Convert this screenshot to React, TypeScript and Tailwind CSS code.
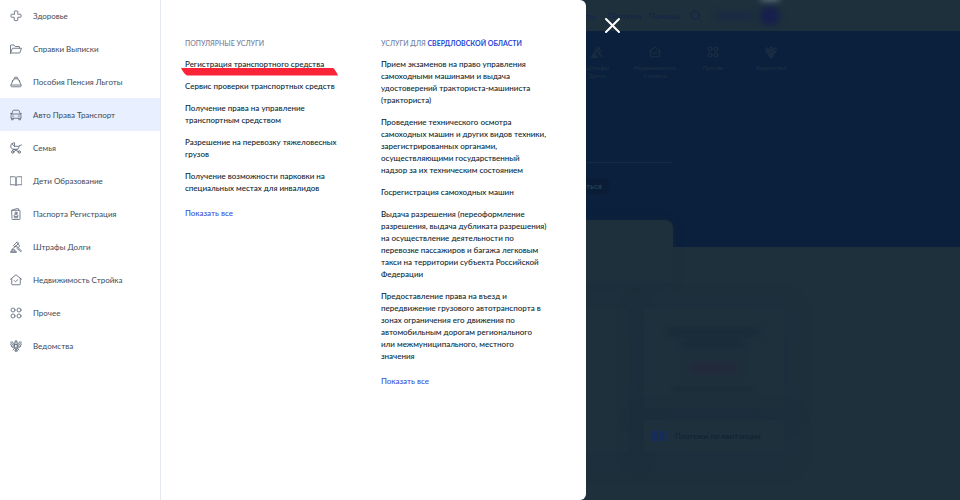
import React from "react";
import { clsx } from "clsx";

type IconProps = {
    className?: string;
    children: React.ReactNode;
};

const Icon = ({ className, children }: IconProps) => (
    <svg
        viewBox="0 0 24 24"
        fill="none"
        stroke="currentColor"
        strokeWidth="1.8"
        strokeLinecap="round"
        strokeLinejoin="round"
        aria-hidden="true"
        className={clsx("shrink-0", className)}
    >
        {children}
    </svg>
);

const icons = {
    health: <path d="M8.500 3a1 1 0 0 1 1-1h5a1 1 0 0 1 1 1v5.500H21a1 1 0 0 1 1 1v4a1 1 0 0 1-1 1h-5.500V20a1 1 0 0 1-1 1h-5a1 1 0 0 1-1-1v-5.500H3a1 1 0 0 1-1-1v-4a1 1 0 0 1 1-1h5.500z" />,
    folder: <path d="M1 20V5a1 1 0 0 1 1-1h6l2.500 3H18a1 1 0 0 1 1 1v2M1 20l4-9.500h18L19.500 20H1z" />,
    purse: (
        <>
            <path d="M6.500 8 2 17.500c-1 2.500 0 4 2 4h16c2 0 3-1.500 2-4L17.500 8" />
            <path d="M4.500 11.500C5.500 6.500 8.500 5.500 12 5.500s6.500 1 7.500 6M8.500 5.500 9.500 2.500h5l1 3M2.500 18h19" />
        </>
    ),
    car: (
        <>
            <path d="M3.500 10 5.500 4C5.800 3 6.500 2.500 7.500 2.500h9c1 0 1.700.5 2 1.500L20.500 10M1 9l2.500 1M23 9l-2.500 1M3.500 10h17c1 1 1.500 2 1.500 3.500V18.500H2v-5c0-1.500.500-2.500 1.500-3.500z" />
            <path d="M3 18.500v3h3.500v-3M17.500 18.500v3H21v-3M5.500 14h2M16.500 14h2" />
        </>
    ),
    family: (
        <>
            <path d="M9 8.500V1.500C5 1.500 1.500 4.500 1.500 8c0 4 2.500 6.500 6 6.500h6.500c2.500 0 3.500-2 4-5L19 7l4-1M9 8.500 3.500 3.500M9 8.500h9M15 14.500 6 20M8 14.500l10 5.500M7 14.500 4.500 18" />
            <circle cx="5.500" cy="20" r="2.500" />
            <circle cx="18.500" cy="20" r="2.500" />
        </>
    ),
    book: <path d="M1 3.500h8c2 0 3 1 3 2.500V21c-.5-1-1.500-1.500-3-1.500H1zM23 3.500h-8c-2 0-3 1-3 2.500V21c.5-1 1.500-1.500 3-1.500h8z" />,
    passport: (
        <>
            <path d="M4 4.500h15a1 1 0 0 1 1 1V22a1 1 0 0 1-1 1H5a1 1 0 0 1-1-1zM4 4.500 15 .8c1-.3 2 .2 2 1.200v2.500M8.500 19.500h7" />
            <circle cx="12" cy="10" r="2.200" />
            <path d="M8 16c0-2.200 1.700-3.500 4-3.500s4 1.300 4 3.500z" />
        </>
    ),
    gavel: (
        <>
            <path d="m7.500 8.500 7-7 3 3-7 7zM15 5l4.500 5-3.500 3.500-4.500-4.500M11 11l-7.500 6M15.500 13l7.500 6.500-1.500 2-8-7" />
            <path d="M1.500 22.500v-2h11v2zM4 20v-2.500h5.500V20" />
        </>
    ),
    house: (
        <>
            <path d="M1 10.500 12 1.500l11 9M3.500 9v11.500a1 1 0 0 0 1 1h15a1 1 0 0 0 1-1V9" />
            <path d="m8.500 13 2.500 2.500 4.500-4" />
        </>
    ),
    more: (
        <>
            <circle cx="6" cy="6" r="4" />
            <circle cx="18" cy="6" r="4" />
            <circle cx="6" cy="18" r="4" />
            <circle cx="18" cy="18" r="4" />
        </>
    ),
    eagle: (
        <>
            <path d="M12 1v4M10.500 2.500h3M8 6.500C7 4 9 3.500 10 5v3M16 6.500C17 4 15 3.500 14 5v3" />
            <path d="M9.500 10C7 9 5 7 4 3M9.500 12C6 11 3 9 1.500 4.500M9.500 14C6 14 2.500 12 .8 8M9 16c-3 0-5-1-6.500-3.500M14.500 10C17 9 19 7 20 3M14.500 12c3.500-1 6.500-3 8-7.500M14.500 14c3.500 0 7-2 8.700-6M15 16c3 0 5-1 6.500-3.500" />
            <path d="M9.500 9h5v5L12 17l-2.500-3zM10 16l-4 4M14 16l4 4M12 17v6M12 18l-2.500 4h5z" />
        </>
    ),
};

type IconName = keyof typeof icons;

const categories: { label: string; icon: IconName }[] = [
    { label: "Здоровье", icon: "health" },
    { label: "Справки Выписки", icon: "folder" },
    { label: "Пособия Пенсия Льготы", icon: "purse" },
    { label: "Авто Права Транспорт", icon: "car" },
    { label: "Семья", icon: "family" },
    { label: "Дети Образование", icon: "book" },
    { label: "Паспорта Регистрация", icon: "passport" },
    { label: "Штрафы Долги", icon: "gavel" },
    { label: "Недвижимость Стройка", icon: "house" },
    { label: "Прочее", icon: "more" },
    { label: "Ведомства", icon: "eagle" },
];

const popular = [
    "Регистрация транспортного средства",
    "Сервис проверки транспортных средств",
    "Получение права на управление транспортным средством",
    "Разрешение на перевозку тяжеловесных грузов",
    "Получение возможности парковки на специальных местах для инвалидов",
];

const regional = [
    "Прием экзаменов на право управления самоходными машинами и выдача удостоверений тракториста-машиниста (тракториста)",
    "Проведение технического осмотра самоходных машин и других видов техники, зарегистрированных органами, осуществляющими государственный надзор за их техническим состоянием",
    "Госрегистрация самоходных машин",
    "Выдача разрешения (переоформление разрешения, выдача дубликата разрешения) на осуществление деятельности по перевозке пассажиров и багажа легковым такси на территории субъекта Российской Федерации",
    "Предоставление права на въезд и передвижение грузового автотранспорта в зонах ограничения его движения по автомобильным дорогам регионального или межмуниципального, местного значения",
];

const shortcuts: { label: string; icon: IconName }[] = [
    { label: "Штрафы Долги", icon: "gavel" },
    { label: "Недвижимость Стройка", icon: "house" },
    { label: "Прочее", icon: "more" },
    { label: "Ведомства", icon: "eagle" },
];

type ServiceListProps = {
    title: React.ReactNode;
    items: string[];
    marked?: number;
};

const ServiceList = ({ title, items, marked }: ServiceListProps) => (
    <section className="w-[166px]">
        <h2 className="text-[7px] leading-3 font-medium whitespace-nowrap text-[#747ea0] uppercase">{title}</h2>
        <ul className="mt-[9px] space-y-[10px]">
            {items.map((item, i) => (
                <li key={item} className="relative text-[8px] leading-3 font-medium text-[#0b1f33]">
                    <a href="#">{item}</a>
                    {i === marked && (
                        <svg viewBox="0 0 158 8" className="absolute top-[10px] -left-1 h-2 w-[158px]" aria-hidden="true">
                            <path d="M0 0h152q2 1 5 7.500H6Q3 6 0 0z" fill="#fa2438" />
                        </svg>
                    )}
                </li>
            ))}
        </ul>
        <a href="#" className="mt-[13px] block text-[8px] leading-3 font-medium text-[#3a50e0]">
            Показать все
        </a>
    </section>
);

const Menu = () => (
    <div role="dialog" aria-label="Каталог услуг" className="flex w-[586px] shrink-0 overflow-hidden rounded-r-md bg-white">
        <nav className="w-[161px] shrink-0 border-r border-[#e4e8ef]">
            <ul className="-mt-px">
                {categories.map(({ label, icon }) => (
                    <li key={label}>
                        <a
                            href="#"
                            className={clsx(
                                "flex h-[33px] items-center gap-[11px] pl-[10px] text-[8px] text-[#3c4a5b]",
                                icon === "car" && "bg-[#e8efff]"
                            )}
                        >
                            <Icon className="size-3 text-[#66727f]">{icons[icon]}</Icon>
                            {label}
                        </a>
                    </li>
                ))}
            </ul>
        </nav>
        <div className="flex gap-[30px] px-6 pt-[37px]">
            <ServiceList title="Популярные услуги" items={popular} marked={0} />
            <ServiceList
                title={
                    <>
                        Услуги для <a href="#" className="font-bold text-[#2948d8]">Свердловской области</a>
                    </>
                }
                items={regional}
            />
        </div>
    </div>
);

// Dimmed portal page beside the open menu
const Backdrop = () => (
    <div className="flex min-w-0 flex-1 flex-col overflow-hidden text-[8px] leading-3 text-[#132440]">
        <header className="flex h-[31px] shrink-0 items-center text-[#12234a]">
            <span className="w-[22px]">ты</span>
            <span className="w-[41px]">Платежи</span>
            <span className="w-[41px]">Помощь</span>
            <Icon className="size-3">
                <circle cx="10" cy="10" r="8" />
                <path d="m16 16 6 6" />
            </Icon>
            <span className="ml-[14px] h-2 w-9 rounded-full bg-[#1a2945] blur-[3px]" />
            <span className="relative ml-2 size-5 rounded-full bg-[#171f4c] blur-[3px]">
                <span className="absolute -top-[13px] left-0 h-2 w-5 rounded-full bg-[#64727f]" />
            </span>
        </header>
        <div className="flex h-[216px] shrink-0 flex-col bg-[#0b203c]">
            <ul className="-ml-[18px] flex pt-[15px] text-[#1f3245]">
                {shortcuts.map(({ label, icon }) => (
                    <li key={label} className="flex w-[58px] shrink-0 flex-col items-center text-center text-[6px] leading-2">
                        <Icon className="mb-1.5 size-3">{icons[icon]}</Icon>
                        {label.split(" ").map((word) => (
                            <span key={word}>{word}</span>
                        ))}
                    </li>
                ))}
            </ul>
            <div className="mt-auto mb-[53px] w-[87px]">
                <div className="h-px bg-[#162b40]" />
                <div className="mt-[15px] h-4 w-6 rounded-r-full bg-[#0b1d36] text-[8px] leading-4 font-bold text-[#2a3f50]">ться</div>
            </div>
        </div>
        <div className="relative -mt-[27px] h-[62px] w-[87px] shrink-0 rounded-tr-lg bg-[#1e303c] shadow-[0_2px_8px_#1c2f3e80]" />
        <div className="mt-[26px] flex gap-[15px]">
            <div className="h-[145px] w-[43px] rounded-r-sm bg-[#1e303c] shadow-[0_4px_24px_#1b2c3e80]" />
            <div className="flex w-[140px] flex-col gap-3">
                <div className="flex h-[100px] flex-col items-center rounded-sm bg-[#1e303c] pt-[21px] shadow-[0_4px_24px_#1b2c3e80]">
                    <span className="h-1.5 w-[92px] bg-[#182a38] blur-[3px]" />
                    <span className="mt-1.5 h-1.5 w-16 bg-[#182a38] blur-[3px]" />
                    <span className="mt-4 h-2.5 w-12 bg-[#24283a] blur-[4px]" />
                    <span className="mt-3.5 h-1 w-20 bg-[#1a2b38] blur-[2px]" />
                </div>
                <div className="flex h-8 items-center gap-2 rounded-sm bg-[#1e303c] pl-2 shadow-[0_4px_24px_#1b2c3e80]">
                    <svg viewBox="0 0 15 10" className="h-[10px] w-[15px] shrink-0" fill="#152c5b" aria-hidden="true">
                        <path d="M0 0h1v10H0zM2 0h4v10H2zM8 0h1v10H8zM10 0h2v10h-2zM14 0h1v10h-1z" />
                    </svg>
                    <span className="whitespace-nowrap text-[#101f30]">Платежи по квитанции</span>
                </div>
            </div>
        </div>
    </div>
);

const App = () => (
    <div className="relative flex min-h-screen overflow-hidden bg-[#1e303c] font-['Lato','Noto_Sans',sans-serif]">
        <Menu />
        <Backdrop />
        <button type="button" aria-label="Закрыть" className="absolute top-[17px] left-[604px] text-white">
            <svg viewBox="0 0 16 16" className="size-4" stroke="currentColor" strokeWidth="2" strokeLinecap="round" aria-hidden="true">
                <path d="m2 2 13 13M15 2 2 15" />
            </svg>
        </button>
    </div>
);

export default App;
